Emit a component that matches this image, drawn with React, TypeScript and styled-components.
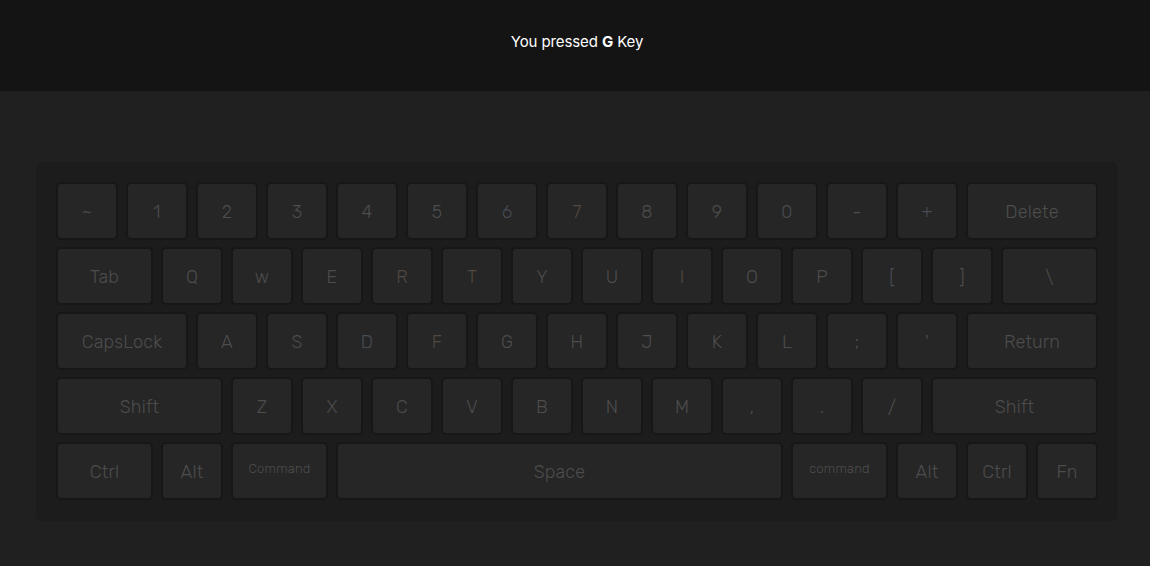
import React from "react";
import styled, { createGlobalStyle } from "styled-components";

const Global = createGlobalStyle`
  html, body { margin: 0; padding: 0; }
  body {
    background: #202020;
    font-family: Rubik, Inter, "Noto Sans", Roboto, sans-serif;
  }
`;

const Header = styled.header`
  height: 91px;
  background: #141414;
  display: flex;
  justify-content: center;
  padding: 32px 0 0 4px;
  box-sizing: border-box;
  color: #ffffff;
  font-family: Inter, "Noto Sans", sans-serif;
  font-size: 15px;
  line-height: 20px;
  letter-spacing: -0.1px;
`;

const Strong = styled.b`
  font-weight: 700;
`;

const Stage = styled.main`
  display: flex;
  justify-content: center;
  padding: 71px 0 0 4px;
`;

const Board = styled.div`
  background: #1c1c1c;
  border-radius: 7px;
  padding: 20px 20px 21px 20px;
  display: flex;
  flex-direction: column;
  gap: 7px;
`;

const Row = styled.div`
  display: flex;
  gap: 8px;
`;

type Tint = "plain" | "warm" | "cool";

const tintColor: Record<Tint, string> = {
  plain: "#4d4d4d",
  warm: "#524840",
  cool: "#464c54",
};

const Key = styled.div<{ $w: number; $tint: Tint; $small?: boolean }>`
  width: ${(p) => p.$w}px;
  height: 58px;
  box-sizing: border-box;
  background: #262626;
  border: 2px solid #171717;
  border-radius: 5px;
  display: flex;
  align-items: center;
  justify-content: center;
  color: ${(p) => tintColor[p.$tint]};
  font-family: Rubik, Roboto, "Noto Sans", sans-serif;
  font-weight: 300;
  font-size: ${(p) => (p.$small ? "13px" : "18px")};
  padding: ${(p) => (p.$small ? "0 0 6px" : "2px 0 0")};
  letter-spacing: 0.2px;
`;

type K = { l: string; w?: number; t?: Tint; s?: boolean };

const rows: K[][] = [
  [
    { l: "~" }, { l: "1" }, { l: "2" }, { l: "3" }, { l: "4" }, { l: "5" },
    { l: "6", t: "cool" }, { l: "7", t: "warm" }, { l: "8" }, { l: "9" },
    { l: "0", t: "cool" }, { l: "-" }, { l: "+", t: "cool" }, { l: "Delete", w: 132 },
  ],
  [
    { l: "Tab", w: 97 }, { l: "Q" }, { l: "w" }, { l: "E" }, { l: "R", t: "warm" },
    { l: "T", t: "warm" }, { l: "Y" }, { l: "U" }, { l: "I", t: "warm" }, { l: "O" },
    { l: "P" }, { l: "[", t: "cool" }, { l: "]" }, { l: "\\", w: 97 },
  ],
  [
    { l: "CapsLock", w: 132 }, { l: "A" }, { l: "S" }, { l: "D", t: "cool" },
    { l: "F", t: "warm" }, { l: "G" }, { l: "H" }, { l: "J" }, { l: "K" }, { l: "L" },
    { l: ";" }, { l: "'" }, { l: "Return", w: 132 },
  ],
  [
    { l: "Shift", w: 167 }, { l: "Z" }, { l: "X" }, { l: "C" }, { l: "V" },
    { l: "B" }, { l: "N" }, { l: "M" }, { l: "," }, { l: "." }, { l: "/" },
    { l: "Shift", w: 167 },
  ],
  [
    { l: "Ctrl", w: 97 }, { l: "Alt" }, { l: "Command", w: 97, s: true },
    { l: "Space", w: 447 }, { l: "command", w: 97, s: true }, { l: "Alt" },
    { l: "Ctrl" }, { l: "Fn" },
  ],
];

export default function App() {
  return (
    <>
      <Global />
      <Header>
        <span>
          You pressed <Strong>G</Strong> Key
        </span>
      </Header>
      <Stage>
        <Board>
          {rows.map((row, i) => (
            <Row key={i}>
              {row.map((k, j) => (
                <Key key={j} $w={k.w ?? 62} $tint={k.t ?? "plain"} $small={k.s}>
                  {k.l}
                </Key>
              ))}
            </Row>
          ))}
        </Board>
      </Stage>
    </>
  );
}
